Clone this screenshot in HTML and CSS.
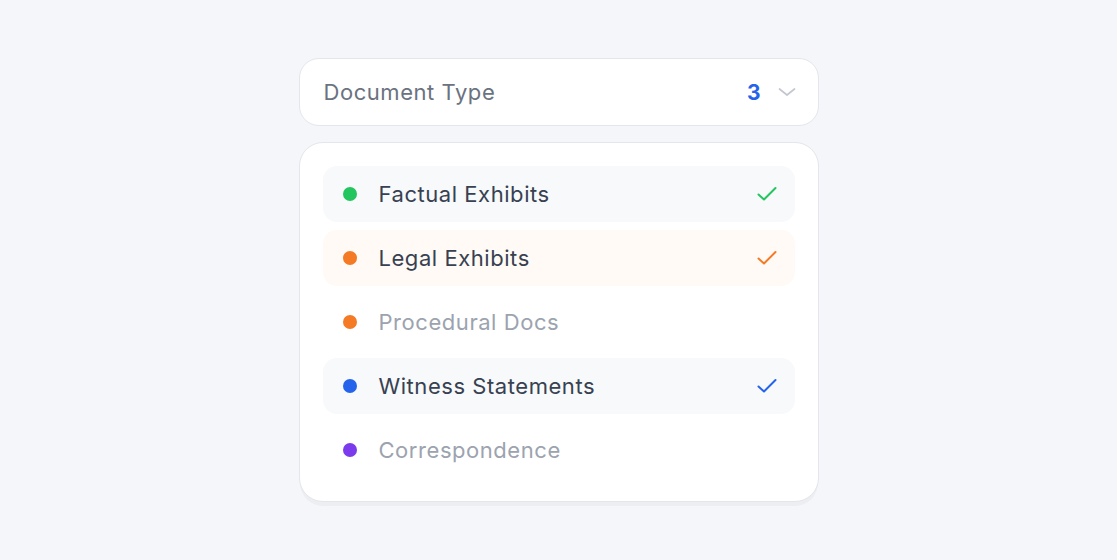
FILE: index.html
```html
<!DOCTYPE html>
<html lang="en">
<head>
<meta charset="utf-8">
<title>Document Type</title>
<link rel="stylesheet" href="styles.css">
</head>
<body>
<div class="wrap">
  <div class="trigger">
    <span class="trigger-label">Document Type</span>
    <span class="trigger-right">
      <span class="count">3</span>
      <svg class="chev" width="20" height="20" viewBox="0 0 20 20" fill="none"><path d="M2.5 7 L10 13 L17.5 7" stroke="#c3c8d0" stroke-width="1.7" stroke-linecap="round" stroke-linejoin="round"/></svg>
    </span>
  </div>
  <div class="menu">
    <div class="item sel green">
      <span class="dot"></span><span class="label">Factual Exhibits</span>
      <svg class="check" width="24" height="24" viewBox="0 0 24 24" fill="none"><path d="M3.5 12.5 L9 17.5 L20.5 6" stroke="currentColor" stroke-width="2" stroke-linecap="round" stroke-linejoin="round"/></svg>
    </div>
    <div class="item sel orange">
      <span class="dot"></span><span class="label">Legal Exhibits</span>
      <svg class="check" width="24" height="24" viewBox="0 0 24 24" fill="none"><path d="M3.5 12.5 L9 17.5 L20.5 6" stroke="currentColor" stroke-width="2" stroke-linecap="round" stroke-linejoin="round"/></svg>
    </div>
    <div class="item orange off">
      <span class="dot"></span><span class="label">Procedural Docs</span>
    </div>
    <div class="item sel blue">
      <span class="dot"></span><span class="label">Witness Statements</span>
      <svg class="check" width="24" height="24" viewBox="0 0 24 24" fill="none"><path d="M3.5 12.5 L9 17.5 L20.5 6" stroke="currentColor" stroke-width="2" stroke-linecap="round" stroke-linejoin="round"/></svg>
    </div>
    <div class="item purple off">
      <span class="dot"></span><span class="label">Correspondence</span>
    </div>
  </div>
</div>
</body>
</html>
```

FILE: styles.css
```css
* { box-sizing: border-box; }
html, body { margin: 0; padding: 0; }
body {
  background: #f5f6f9;
  font-family: Inter, "Noto Sans", "Liberation Sans", sans-serif;
  width: 1117px;
  height: 560px;
}
.wrap {
  width: 520px;
  margin: 0 auto;
  padding-top: 58px;
  display: flex;
  flex-direction: column;
  gap: 16px;
}
.trigger {
  height: 68px;
  background: #fff;
  border: 1px solid #e3e6eb;
  border-radius: 20px;
  display: flex;
  align-items: center;
  justify-content: space-between;
  padding: 0 21px 0 24px;
}
.trigger-label {
  font-size: 22px;
  color: #6b7280;
  letter-spacing: 0.55px;
}
.trigger-right {
  display: flex;
  align-items: center;
  gap: 16px;
}
.count {
  font-size: 21px;
  font-weight: 700;
  color: #2563eb;
}
.chev { display: block; }
.menu {
  background: #fff;
  border: 1px solid #e3e6eb;
  border-radius: 24px;
  padding: 23px;
  display: flex;
  flex-direction: column;
  gap: 8px;
  box-shadow: 0 5px 0 -1px #eceef2;
}
.item {
  height: 56px;
  border-radius: 14px;
  display: flex;
  align-items: center;
  padding: 0 16px 0 20px;
}
.item.sel.green, .item.sel.blue { background: #f7f9fb; }
.item.sel.orange { background: #fffaf5; }
.dot {
  width: 14px;
  height: 14px;
  border-radius: 50%;
  flex: none;
}
.green .dot { background: #22c55e; }
.orange .dot { background: #f47a26; }
.blue .dot { background: #2563eb; }
.purple .dot { background: #7c3aed; }
.label {
  margin-left: 22px;
  font-size: 22px;
  color: #374151;
  flex: 1;
  letter-spacing: 0.55px;
}
.off .label { color: #9ca3af; }
.check { flex: none; display: block; }
.green .check { color: #22c55e; }
.orange .check { color: #f47a26; }
.blue .check { color: #2563eb; }
```
